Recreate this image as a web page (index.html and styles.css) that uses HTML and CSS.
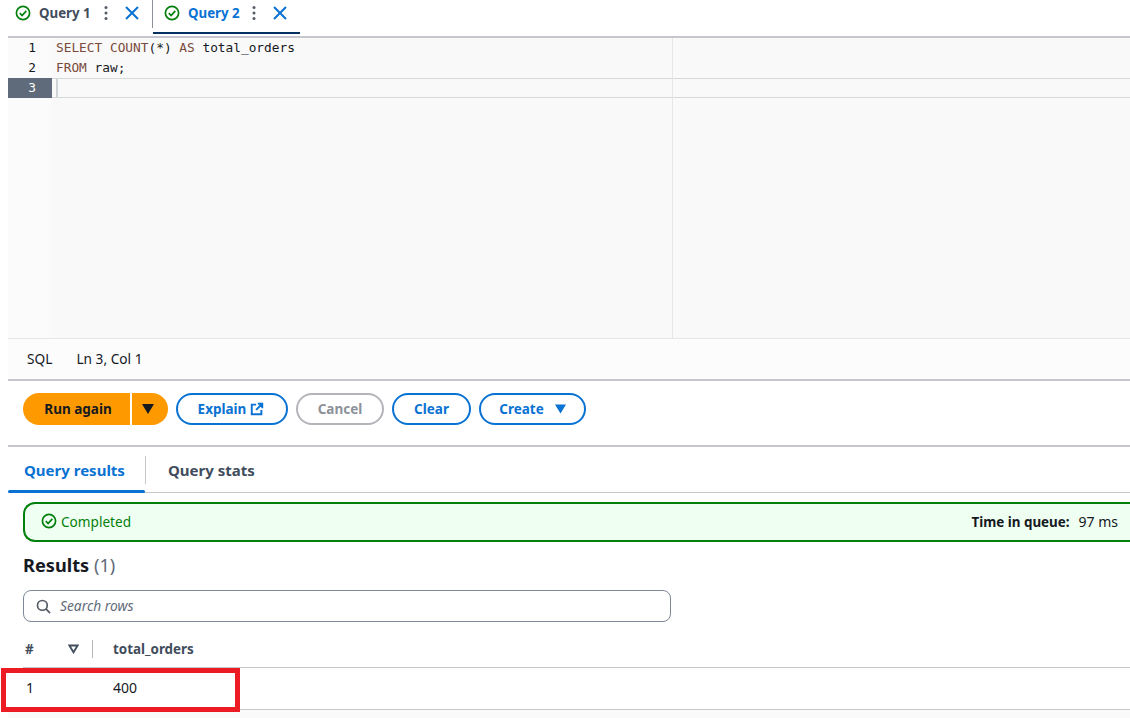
FILE: index.html
```html
<!DOCTYPE html>
<html lang="en">
<head>
<meta charset="utf-8">
<title>Query editor</title>
<link rel="stylesheet" href="styles.css">
</head>
<body>
<main class="page">
  <div class="qtabs">
    <div class="qtab">
      <svg class="ok" viewBox="0 0 16 16"><circle cx="8" cy="8" r="6.6"/><path d="M4.8 8.2l2.3 2.3 4.2-4.6"/></svg>
      <span class="qtab-name">Query 1</span>
      <svg class="dots" viewBox="0 0 4 16"><circle cx="2" cy="2.5" r="1.5"/><circle cx="2" cy="8" r="1.5"/><circle cx="2" cy="13.5" r="1.5"/></svg>
      <svg class="close" viewBox="0 0 16 16"><path d="M2 2l12 12M14 2L2 14"/></svg>
    </div>
    <div class="qtab qtab-active">
      <svg class="ok" viewBox="0 0 16 16"><circle cx="8" cy="8" r="6.6"/><path d="M4.8 8.2l2.3 2.3 4.2-4.6"/></svg>
      <span class="qtab-name">Query 2</span>
      <svg class="dots" viewBox="0 0 4 16"><circle cx="2" cy="2.5" r="1.5"/><circle cx="2" cy="8" r="1.5"/><circle cx="2" cy="13.5" r="1.5"/></svg>
      <svg class="close" viewBox="0 0 16 16"><path d="M2 2l12 12M14 2L2 14"/></svg>
    </div>
  </div>

  <section class="editor">
    <div class="gutter">
      <div class="ln">1</div>
      <div class="ln">2</div>
      <div class="ln ln-cur">3</div>
    </div>
    <div class="code">
      <div class="margin-line"></div>
      <div class="cl"><span class="kw">SELECT</span> <span class="kw">COUNT</span>(*) <span class="kw">AS</span> total_orders</div>
      <div class="cl"><span class="kw">FROM</span> raw;</div>
      <div class="cl cl-cur"><span class="cursor"></span></div>
    </div>
  </section>

  <div class="status"><span>SQL</span><span>Ln 3, Col 1</span></div>

  <div class="actions">
    <div class="split">
      <button class="btn-primary">Run again</button>
      <button class="btn-primary btn-caret"><svg class="caret" viewBox="0 0 12 10"><path d="M0 0h12L6 10z"/></svg></button>
    </div>
    <button class="btn btn-explain">Explain <svg class="ext" viewBox="0 0 16 16"><path d="M7 3H2v11h11V9M9 2h5v5M14 2L7 9"/></svg></button>
    <button class="btn btn-cancel">Cancel</button>
    <button class="btn btn-clear">Clear</button>
    <button class="btn btn-create">Create <svg class="caret caret-blue" viewBox="0 0 12 10"><path d="M0 0h12L6 10z"/></svg></button>
  </div>

  <div class="rtabs">
    <div class="rtab rtab-active">Query results</div>
    <div class="rtab-sep"></div>
    <div class="rtab">Query stats</div>
  </div>

  <div class="alert">
    <div class="alert-l">
      <svg class="ok" viewBox="0 0 16 16"><circle cx="8" cy="8" r="6.6"/><path d="M4.8 8.2l2.3 2.3 4.2-4.6"/></svg>
      <span>Completed</span>
    </div>
    <div class="alert-r"><b>Time in queue:</b><span class="alert-val">97 ms</span></div>
  </div>

  <h2 class="results-title">Results <span class="count">(1)</span></h2>

  <div class="search">
    <svg class="search-ic" viewBox="0 0 16 16"><circle cx="6.8" cy="6.8" r="5.2"/><path d="M10.6 10.6L15 15"/></svg>
    <span>Search rows</span>
  </div>

  <div class="thead">
    <div class="c1">#</div>
    <svg class="sort" viewBox="0 0 12 10"><path d="M1.5 1.2h9L6 8.6z"/></svg>
    <div class="th-sep"></div>
    <div class="c2">total_orders</div>
  </div>
  <div class="trow">
    <div class="c1">1</div>
    <div class="c2">400</div>
    <div class="redbox"></div>
  </div>
  <div class="tfoot"></div>
</main>
</body>
</html>
```

FILE: styles.css
```css
html, body { margin: 0; padding: 0; }
body {
  background: #fff;
  color: #16191f;
  font-family: "Noto Sans", "Open Sans", sans-serif;
  font-size: 14px;
  width: 1130px;
  height: 718px;
  overflow: hidden;
}
.page { padding-left: 8px; position: relative; height: 718px; }

.qtabs { display: flex; height: 36px; }
.qtab {
  display: flex; align-items: flex-start; width: 144px; height: 35px; box-sizing: border-box;
  padding: 5px 0 0 7px; position: relative;
}
.qtab + .qtab { border-left: 1px solid #8d9199; height: 28px; width: 148px; padding-left: 11px; }
.qtab-active::after {
  content: ""; position: absolute; left: 0; right: 0; top: 32px; height: 2px; background: #033160;
}
.ok { width: 16px; height: 16px; fill: none; stroke: #037f0c; stroke-width: 1.7; flex: none; }
.qtab-name { font-size: 13.3px; font-weight: 700; color: #414d5c; margin-left: 8px; line-height: 17px; }
.qtab-active .qtab-name { color: #0972d3; }
.dots { width: 4px; height: 16px; fill: #545b64; margin-left: 13px; }
.close { width: 16px; height: 16px; fill: none; stroke: #0972d3; stroke-width: 2; margin-left: 16px; }
.qtab-active .dots { margin-left: 12px; }

.editor {
  display: flex; height: 302px; border-top: 2px solid #c6c6cd;
  background: #f9f9f9; box-sizing: border-box;
}
.gutter { width: 44px; flex: none; background: #fbfbfb; }
.ln {
  height: 20px; text-align: right; padding-right: 16px;
  font: 12.8px/20px "DejaVu Sans Mono", monospace; color: #16191f;
}
.ln-cur { background: #5f6b7a; color: #fff; }
.code { flex: 1; position: relative; padding-left: 4px; font: 12.8px/20px "DejaVu Sans Mono", monospace; color: #16191f; }
.margin-line { position: absolute; left: 620px; top: 0; bottom: 0; width: 1px; background: #e6e6e6; }
.cl { height: 20px; white-space: pre; }
.kw { color: #7a4a3a; }
.cl-cur {
  margin-left: -4px; border-top: 1px solid #d5dbdb; border-bottom: 1px solid #d5dbdb;
  padding-left: 4px; height: 18px;
}
.cursor { display: block; width: 2px; height: 18px; background: #d0d3d6; }

.status {
  display: flex; gap: 24px; align-items: center; padding: 0 0 2px 19px;
  border-top: 1px solid #e6e6e6; border-bottom: 2px solid #c6c6cd; background: #fcfcfc;
  box-sizing: border-box; height: 43px; font-size: 13.7px; color: #16191f;
}

.actions { display: flex; align-items: flex-start; height: 66px; padding: 12px 0 0 15px; gap: 8px; box-sizing: border-box; border-bottom: 2px solid #c6c6cd; }
.split { display: flex; gap: 2px; }
button { font-family: inherit; font-weight: 700; font-size: 13.5px; padding: 0; margin: 0; box-sizing: border-box; height: 32px; cursor: pointer; }
.btn-primary { background: #ff9900; border: 0; color: #16191f; width: 107px; border-radius: 16px 0 0 16px; padding-left: 3px; }
.btn-caret { width: 36px; border-radius: 0 16px 16px 0; display: flex; align-items: center; justify-content: center; padding: 0 4px 0 0; }
.caret { width: 12px; height: 10px; fill: #16191f; display: inline-block; }
.caret-blue { fill: #0972d3; width: 11px; margin-left: 11px; }
.btn { background: #fff; border: 2px solid #0972d3; color: #0972d3; border-radius: 16px; display: flex; align-items: center; justify-content: center; }
.btn-explain { width: 112px; gap: 4px; padding-right: 2px; }
.ext { width: 14px; height: 14px; fill: none; stroke: #0972d3; stroke-width: 2.2; }
.btn-cancel { width: 88px; border-color: #b4b4bb; color: #8d9199; }
.btn-clear { width: 79px; }
.btn-create { width: 107px; gap: 0; }

.rtabs { display: flex; height: 46px; border-bottom: 1px solid #c6c6cd; box-sizing: border-box; align-items: center; position: relative; }
.rtab { font-weight: 700; font-size: 15px; color: #414d5c; padding: 0 16px; line-height: 46px; height: 46px; box-sizing: border-box; }
.rtab-active { color: #0972d3; width: 137px; position: relative; white-space: nowrap; }
.rtab-active::after { content: ""; position: absolute; left: 0; right: 0; bottom: 0; height: 3px; background: #0972d3; border-radius: 2px; }
.rtab-sep { width: 1px; height: 28px; background: #c6c6cd; margin-right: 6px; }

.alert {
  display: flex; justify-content: space-between; align-items: center;
  margin: 9px 0 0 15px; height: 40px; box-sizing: border-box; width: 1107px;
  border: 2px solid #037f0c; border-right: 0; border-radius: 12px 0 0 12px; background: #effff1;
  padding: 0 12px 2px 16px;
}
.alert-l { display: flex; align-items: center; gap: 4px; color: #037f0c; font-size: 13.6px; }
.alert-r { display: flex; align-items: baseline; gap: 9px; font-size: 13.4px; color: #16191f; }
.alert-val { font-size: 14px; }

.results-title { font-size: 18.2px; font-weight: 700; margin: 11px 0 0 15px; line-height: 24px; height: 25px; color: #16191f; }
.count { font-weight: 400; color: #5f6b7a; }

.search {
  margin: 12px 0 0 15px; width: 648px; height: 32px; box-sizing: border-box;
  border: 1px solid #7d8998; border-radius: 8px; display: flex; align-items: center;
  padding: 0 0 2px 12px; gap: 9px; font-style: italic; font-size: 13.8px; color: #5f6b7a;
}
.search-ic { width: 15px; height: 15px; fill: none; stroke: #545b64; stroke-width: 1.8; margin-top: 2px; }

.thead { display: flex; align-items: center; height: 46px; padding-top: 8px; margin-left: 15px; border-bottom: 1px solid #c6c6cd; box-sizing: border-box; font-weight: 700; font-size: 13.4px; color: #414d5c; }
.thead .c1 { width: 45px; padding-left: 2px; box-sizing: border-box; }
.sort { width: 11px; height: 10px; fill: none; stroke: #414d5c; stroke-width: 2; }
.th-sep { width: 1px; height: 18px; background: #b4b4bb; margin: 0 20px 0 13px; }
.trow { display: flex; align-items: center; height: 42px; padding-bottom: 2px; margin-left: 15px; border-bottom: 1px solid #c6c6cd; font-size: 14px; position: relative; box-sizing: border-box; }
.trow .c1 { width: 90px; padding-left: 3px; box-sizing: border-box; }
.redbox { position: absolute; left: -22px; top: 0; width: 239px; height: 44px; box-sizing: border-box; border: 5px solid #ed1c24; }
.tfoot { height: 8px; background: #fafafa; }
```
